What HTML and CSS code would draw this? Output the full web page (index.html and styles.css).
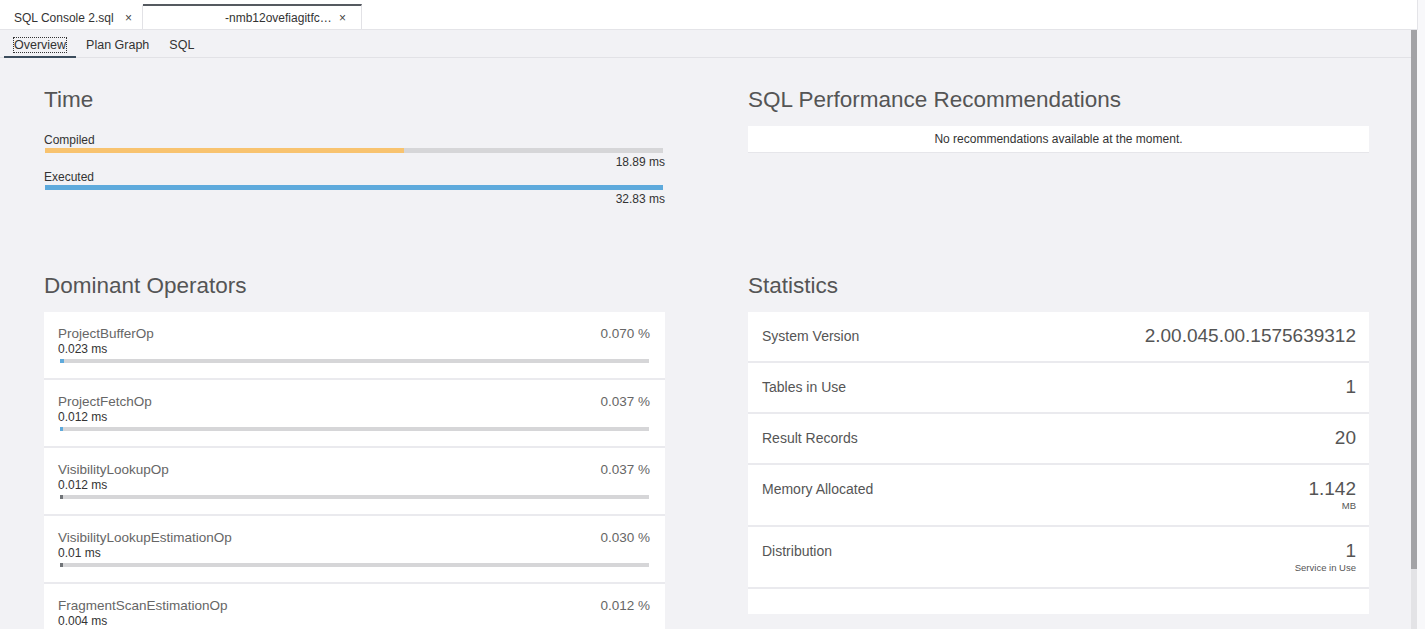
FILE: index.html
```html
<!DOCTYPE html>
<html lang="en">
<head>
<meta charset="utf-8">
<title>Plan Viewer</title>
<link rel="stylesheet" href="styles.css">
</head>
<body>
<header class="tabs">
  <div class="tab"><span class="tab-label">SQL Console 2.sql</span><span class="tab-close">×</span></div>
  <div class="tab tab-active"><span class="tab-label">-nmb12ovefiagitfc…</span><span class="tab-close">×</span></div>
</header>
<div class="workspace">
  <div class="viewer">
    <nav class="subtabs">
      <a class="subtab subtab-active"><span class="focus">Overview</span></a>
      <a class="subtab">Plan Graph</a>
      <a class="subtab">SQL</a>
    </nav>
    <main class="overview">
      <section class="panel">
        <h2 class="panel-title">Time</h2>
        <div class="time">
          <div class="time-label">Compiled</div>
          <div class="bar bar-time"><div class="fill fill-orange" style="width:58.1%"></div></div>
          <div class="time-value">18.89 ms</div>
          <div class="time-label">Executed</div>
          <div class="bar bar-time"><div class="fill fill-blue" style="width:100%"></div></div>
          <div class="time-value">32.83 ms</div>
        </div>
      </section>
      <section class="panel">
        <h2 class="panel-title">SQL Performance Recommendations</h2>
        <div class="empty-box">No recommendations available at the moment.</div>
      </section>
      <section class="panel">
        <h2 class="panel-title">Dominant Operators</h2>
        <div class="card">
          <div class="op">
            <div class="op-head"><span class="op-name">ProjectBufferOp</span><span class="op-pct">0.070 %</span></div>
            <div class="op-time">0.023 ms</div>
            <div class="bar bar-op"><div class="fill fill-blue" style="width:4px"></div></div>
          </div>
          <div class="op">
            <div class="op-head"><span class="op-name">ProjectFetchOp</span><span class="op-pct">0.037 %</span></div>
            <div class="op-time">0.012 ms</div>
            <div class="bar bar-op"><div class="fill fill-blue" style="width:3px"></div></div>
          </div>
          <div class="op">
            <div class="op-head"><span class="op-name">VisibilityLookupOp</span><span class="op-pct">0.037 %</span></div>
            <div class="op-time">0.012 ms</div>
            <div class="bar bar-op"><div class="fill fill-gray" style="width:3px"></div></div>
          </div>
          <div class="op">
            <div class="op-head"><span class="op-name">VisibilityLookupEstimationOp</span><span class="op-pct">0.030 %</span></div>
            <div class="op-time">0.01 ms</div>
            <div class="bar bar-op"><div class="fill fill-gray" style="width:3px"></div></div>
          </div>
          <div class="op">
            <div class="op-head"><span class="op-name">FragmentScanEstimationOp</span><span class="op-pct">0.012 %</span></div>
            <div class="op-time">0.004 ms</div>
            <div class="bar bar-op"><div class="fill fill-gray" style="width:2px"></div></div>
          </div>
        </div>
      </section>
      <section class="panel">
        <h2 class="panel-title">Statistics</h2>
        <div class="card">
          <div class="stat">
            <span class="stat-label">System Version</span>
            <div class="stat-value"><span class="stat-num">2.00.045.00.1575639312</span></div>
          </div>
          <div class="stat">
            <span class="stat-label">Tables in Use</span>
            <div class="stat-value"><span class="stat-num">1</span></div>
          </div>
          <div class="stat">
            <span class="stat-label">Result Records</span>
            <div class="stat-value"><span class="stat-num">20</span></div>
          </div>
          <div class="stat">
            <span class="stat-label">Memory Allocated</span>
            <div class="stat-value"><span class="stat-num">1.142</span><span class="stat-unit">MB</span></div>
          </div>
          <div class="stat">
            <span class="stat-label">Distribution</span>
            <div class="stat-value"><span class="stat-num">1</span><span class="stat-unit">Service in Use</span></div>
          </div>
          <div class="stat stat-empty"></div>
        </div>
      </section>
    </main>
  </div>
  <div class="scrollbar"><div class="scroll-thumb"></div></div>
</div>
</body>
</html>
```

FILE: styles.css
```css
* { box-sizing: border-box; }

html, body {
  margin: 0;
  height: 100%;
  overflow: hidden;
}

body {
  font-family: "Liberation Sans", Arial, sans-serif;
  background: #f8f8fa;
  color: #333;
}

/* top editor tabs */
.tabs {
  display: flex;
  align-items: flex-start;
  height: 30px;
  padding-top: 4px;
  background: #ffffff;
  border-bottom: 1px solid #e4e4e8;
  width: 1418px;
  border-right: 1px solid #e4e4e8;
}

.tab {
  display: flex;
  align-items: center;
  height: 25px;
  font-size: 12px;
  color: #333;
  border-right: 1px solid #e2e2e6;
  border-top: 2px solid transparent;
  padding-top: 1px;
}

.tab:first-child {
  width: 143px;
  padding-left: 14px;
}

.tab-active {
  width: 219px;
  padding-left: 82px;
  border-top-color: #555a60;
}

.tab-label { flex: 1; }

.tab-close {
  width: 22px;
  font-size: 12px;
  color: #444;
}

.tab:first-child .tab-close { width: 17px; }

/* workspace: content + scrollbar */
.workspace {
  display: flex;
  height: 599px;
}

.viewer {
  width: 1411px;
  height: 100%;
  overflow: hidden;
  background: #f2f2f5;
}

.scrollbar {
  width: 6px;
  height: 100%;
  background: #e3e3e6;
}

.scroll-thumb {
  height: 539px;
  background: #a3a3a6;
}

/* sub tabs */
.subtabs {
  display: flex;
  height: 28px;
  padding-left: 4px;
  border-bottom: 1px solid #e2e2e6;
}

.subtab {
  display: flex;
  align-items: center;
  padding: 4px 10px 0;
  font-size: 12.5px;
  color: #333;
  border-bottom: 2px solid transparent;
  margin-bottom: -1px;
}

.subtab-active {
  border-bottom-color: #3b4c5c;
}

.focus {
  outline: 1px dotted #333;
  outline-offset: 0;
}

/* overview grid */
.overview {
  display: grid;
  grid-template-columns: 621px 621px;
  column-gap: 83px;
  row-gap: 65px;
  align-items: start;
  padding: 28px 0 46px 44px;
}

.panel-title {
  margin: 0 0 13px;
  font-size: 22.5px;
  line-height: 27px;
  font-weight: normal;
  color: #555;
}

/* time */
.time {
  padding-top: 7px;
}

.time-label {
  font-size: 12px;
  line-height: 14px;
  color: #333;
}

.time-label + .bar { margin-top: 1px; }

.time-value {
  font-size: 12px;
  line-height: 14px;
  text-align: right;
  color: #333;
  margin: 2px 0 1px;
}

.bar {
  background: #d6d6d8;
  overflow: hidden;
}

.bar-time {
  height: 5px;
  margin: 0 2px 0 1px;
}

.fill { height: 100%; }
.fill-orange { background: #f8c36f; }
.fill-blue { background: #5eaadc; }
.fill-gray { background: #707478; }

/* recommendations */
.empty-box {
  height: 27px;
  line-height: 26px;
  background: #fff;
  border-bottom: 1px solid #e6e6ea;
  text-align: center;
  font-size: 12px;
  color: #333;
  margin-top: 1px;
}

/* cards */
.card {
  background: #fff;
}

.op {
  height: 66px;
  padding: 14px 15px 0 14px;
}

.op + .op,
.stat + .stat {
  border-top: 2px solid #eaeaee;
}

.op + .op { height: 68px; }

.op-head {
  display: flex;
  justify-content: space-between;
  font-size: 13.5px;
  line-height: 16px;
  color: #666;
}

.op-time {
  font-size: 12px;
  line-height: 15px;
  color: #333;
}

.bar-op {
  height: 4px;
  margin: 2px 1px 0 2px;
}

/* statistics */
.stat {
  display: flex;
  justify-content: space-between;
  align-items: flex-start;
  padding: 13px 13px 14px 14px;
}

.stat-label {
  margin-top: 3px;
  font-size: 14px;
  line-height: 16px;
  color: #555;
}

.stat-value {
  display: flex;
  flex-direction: column;
  align-items: flex-end;
  color: #555;
}

.stat-num {
  font-size: 19px;
  line-height: 22px;
}

.stat-unit {
  font-size: 9.5px;
  line-height: 11px;
  color: #555;
}

.stat-empty {
  height: 27px;
  padding: 0;
}
```
